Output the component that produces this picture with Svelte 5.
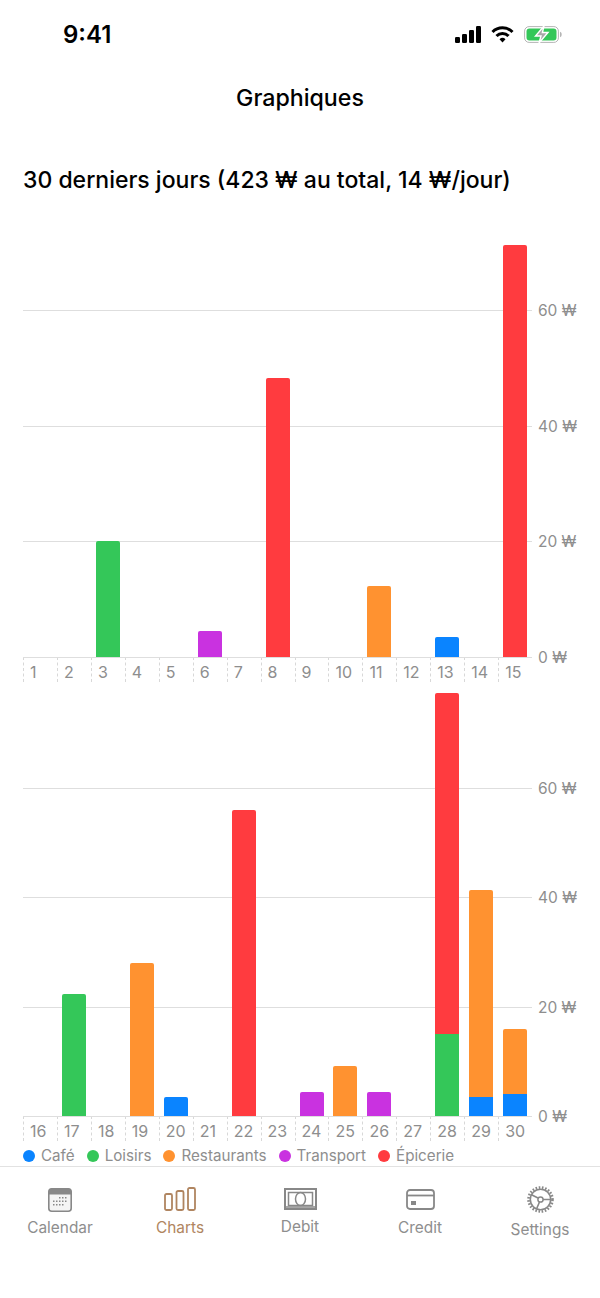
<script>
  const categories = [
    { name: "Café", color: "#0a84ff" },
    { name: "Loisirs", color: "#34c759" },
    { name: "Restaurants", color: "#ff9230" },
    { name: "Transport", color: "#c932e0" },
    { name: "Épicerie", color: "#ff3b3f" },
  ];
  const [cafe, loisirs, resto, transport, epicerie] = categories.map((c) => c.color);

  // segments are [color, value], stacked from the bottom
  const charts = [
    {
      scale: 5.78,
      height: 412,
      days: {
        3: [[loisirs, 20]],
        6: [[transport, 4.5]],
        8: [[epicerie, 48.3]],
        11: [[resto, 12.3]],
        13: [[cafe, 3.4]],
        15: [[epicerie, 71.3]],
      },
      from: 1,
    },
    {
      scale: 5.47,
      height: 423,
      days: {
        17: [[loisirs, 22.3]],
        19: [[resto, 27.9]],
        20: [[cafe, 3.4]],
        22: [[epicerie, 56]],
        24: [[transport, 4.4]],
        25: [[resto, 9.2]],
        26: [[transport, 4.4]],
        28: [[loisirs, 15], [epicerie, 62.3]],
        29: [[cafe, 3.4], [resto, 38]],
        30: [[cafe, 4], [resto, 11.9]],
      },
      from: 16,
    },
  ];
  const axis = [0, 20, 40, 60];
  const range = (from) => Array.from({ length: 15 }, (_, i) => from + i);
</script>

<div class="page">
  <div class="status">
    <span class="time">9:41</span>
    <div class="status-icons">
      <svg width="26" height="17" viewBox="0 0 26 17" fill="#000">
        <rect x="0" y="11" width="5" height="6" rx="1.2" />
        <rect x="7" y="8" width="5" height="9" rx="1.2" />
        <rect x="14" y="4" width="5" height="13" rx="1.2" />
        <rect x="21" y="0" width="5" height="17" rx="1.2" />
      </svg>
      <svg width="23" height="17" viewBox="0 0 23 17" fill="none" stroke="#000" stroke-width="3">
        <path d="M1.5 6a14 14 0 0 1 20 0" />
        <path d="M5.5 10a8.4 8.4 0 0 1 12 0" />
        <path d="M11.5 16.5l-3-3.3a4.3 4.3 0 0 1 6 0z" fill="#000" stroke="none" />
      </svg>
      <svg width="38" height="17" viewBox="0 0 38 17">
        <rect x="0.6" y="0.6" width="33.8" height="15.8" rx="4.5" fill="none" stroke="#b5b5b5" />
        <rect x="2.5" y="2.5" width="30" height="12" rx="3" fill="#34c759" />
        <path d="M36 5.8c1.2.4 1.7 1.5 1.7 2.7s-.5 2.3-1.7 2.7z" fill="#b5b5b5" />
        <path d="M20 0L11.5 10h5.5L15 17l9-10.5h-5.6z" fill="#a8a8a8" stroke="#fff" stroke-width="1.4" />
      </svg>
    </div>
  </div>

  <h1 class="nav-title">Graphiques</h1>
  <h2 class="heading">30 derniers jours (423 ₩ au total, 14 ₩/jour)</h2>

  <div class="charts">
    {#each charts as chart}
      <div class="chart">
        <div class="plot" style="height: {chart.height}px">
          {#each axis as tick}
            <div class="gridline" style="bottom: {tick * chart.scale - 1}px">
              <span class="axis-label">{tick} ₩</span>
            </div>
          {/each}
          {#each range(chart.from) as day}
            <div class="col">
              {#if chart.days[day]}
                <div class="bar">
                  {#each [...chart.days[day]].reverse() as [color, value]}
                    <div style="background: {color}; height: {value * chart.scale}px"></div>
                  {/each}
                </div>
              {/if}
            </div>
          {/each}
        </div>
        <div class="ticks">
          {#each range(chart.from) as day}
            <span class="tick">{day}</span>
          {/each}
        </div>
      </div>
    {/each}
  </div>

  <div class="legend">
    {#each categories as cat}
      <span class="legend-item"><i style="background: {cat.color}"></i>{cat.name}</span>
    {/each}
  </div>

  <nav class="tabs">
    <div class="tab t-cal">
      <svg width="24" height="24" viewBox="0 0 24 24">
        <rect x="0.8" y="0.8" width="22.4" height="22.4" rx="3" fill="#f4f4f4" stroke="#888" stroke-width="1.6" />
        <path d="M3 0.8h18a2.2 2.2 0 0 1 2.2 2.2v3.5H.8V3A2.2 2.2 0 0 1 3 .8z" fill="#888" />
        <g fill="#888">
          <rect x="11" y="9" width="1.5" height="1.5" /><rect x="14" y="9" width="1.5" height="1.5" /><rect x="17" y="9" width="1.5" height="1.5" />
          <rect x="5" y="12.5" width="1.5" height="1.5" /><rect x="8" y="12.5" width="1.5" height="1.5" /><rect x="11" y="12.5" width="1.5" height="1.5" /><rect x="14" y="12.5" width="1.5" height="1.5" /><rect x="17" y="12.5" width="1.5" height="1.5" />
          <rect x="5" y="16" width="1.5" height="1.5" /><rect x="8" y="16" width="1.5" height="1.5" /><rect x="11" y="16" width="1.5" height="1.5" /><rect x="14" y="16" width="1.5" height="1.5" />
        </g>
      </svg>
      <span class="tab-label">Calendar</span>
    </div>
    <div class="tab t-charts active">
      <svg width="32" height="24" viewBox="0 0 32 24" fill="none" stroke="#b08560" stroke-width="1.8">
        <rect x="1" y="7" width="7" height="16" rx="1.5" />
        <rect x="12.5" y="4" width="7" height="19" rx="1.5" />
        <rect x="24" y="1" width="7" height="22" rx="1.5" />
      </svg>
      <span class="tab-label">Charts</span>
    </div>
    <div class="tab t-debit">
      <svg width="33" height="22" viewBox="0 0 33 22" fill="none" stroke="#888" stroke-width="1.5">
        <rect x="1" y="1" width="31" height="20" stroke-width="2" />
        <rect x="4.5" y="4.5" width="24" height="13" />
        <ellipse cx="16.5" cy="11" rx="5" ry="6.5" />
        <path d="M1 19h31" />
      </svg>
      <span class="tab-label">Debit</span>
    </div>
    <div class="tab t-credit">
      <svg width="29" height="21" viewBox="0 0 29 21" fill="none" stroke="#888" stroke-width="1.8">
        <rect x="1" y="1" width="27" height="19" rx="3" />
        <path d="M1 6.5h27" />
        <rect x="5" y="12" width="5" height="4" fill="#888" stroke="none" />
      </svg>
      <span class="tab-label">Credit</span>
    </div>
    <div class="tab t-settings">
      <svg width="27" height="27" viewBox="0 0 27 27" fill="none" stroke="#888">
        <circle cx="13.5" cy="13.5" r="12" stroke-width="2.6" stroke-dasharray="1.6 1.6" />
        <circle cx="13.5" cy="13.5" r="10.2" stroke-width="1.6" />
        <circle cx="13.5" cy="13.5" r="2.6" stroke-width="1.5" />
        <path d="M11 12L4 8.5M16 13.5h7M12.5 16l-3 7" stroke-width="1.6" />
      </svg>
      <span class="tab-label">Settings</span>
    </div>
  </nav>
</div>

<style>
  :global(body) {
    background: #fff;
    font-family: Inter, "Liberation Sans", sans-serif;
  }
  .page {
    height: 1298px;
    overflow: hidden;
  }
  .status {
    display: flex;
    justify-content: space-between;
    align-items: center;
    height: 68px;
    padding: 0 38px 0 63px;
  }
  .time {
    font-size: 24px;
    font-weight: 600;
    color: #000;
  }
  .status-icons {
    display: flex;
    align-items: center;
    gap: 10px;
  }
  .nav-title {
    margin: 16px 0 0;
    font-size: 23.2px;
    line-height: 28px;
    font-weight: 500;
    text-align: center;
    color: #000;
  }
  .heading {
    margin: 53px 0 0 23px;
    font-size: 23px;
    line-height: 30px;
    font-weight: 500;
    color: #000;
  }
  .charts {
    margin-top: 50px;
    display: flex;
    flex-direction: column;
    gap: 11px;
  }
  .chart {
    margin-left: 23px;
    width: 509px;
  }
  .plot {
    position: relative;
    display: flex;
    align-items: flex-end;
  }
  .gridline {
    position: absolute;
    left: 0;
    right: 0;
    height: 1px;
    background: #dedede;
  }
  .axis-label {
    position: absolute;
    left: calc(100% + 6px);
    top: -9px;
    font-size: 15.5px;
    line-height: 20px;
    color: #8e8e8e;
    white-space: nowrap;
  }
  .col {
    position: relative;
    flex: 1;
    padding-left: 5px;
    box-sizing: border-box;
  }
  .bar {
    width: 24px;
    border-radius: 2px 2px 0 0;
    overflow: hidden;
  }
  .ticks {
    display: flex;
    height: 25px;
  }
  .tick {
    flex: 1;
    box-sizing: border-box;
    padding-left: 6px;
    border-left: 1px dashed #d8d8d8;
    font-size: 16px;
    line-height: 30px;
    color: #8e8e8e;
  }
  .legend {
    display: flex;
    gap: 12px;
    margin: 5px 0 0 23px;
    height: 20px;
    font-size: 15.2px;
    line-height: 20px;
    color: #8e8e8e;
  }
  .legend-item {
    display: flex;
    align-items: center;
    gap: 6px;
  }
  .legend-item i {
    width: 12px;
    height: 12px;
    border-radius: 50%;
  }
  .tabs {
    display: grid;
    grid-template-columns: repeat(5, 1fr);
    border-top: 1px solid #e2e2e2;
    padding-top: 19px;
  }
  .tab {
    display: flex;
    flex-direction: column;
    align-items: center;
    color: #8e8e8e;
    font-size: 15.4px;
  }
  .tab.active {
    color: #b08560;
  }
  .tab-label {
    line-height: 20px;
    margin-top: 6px;
  }
  .t-cal {
    padding-top: 2px;
  }
  .t-charts {
    padding-top: 1px;
  }
  .t-charts .tab-label {
    margin-top: 7px;
  }
  .t-debit {
    padding-top: 2px;
  }
  .t-debit .tab-label {
    margin-top: 7px;
  }
  .t-credit {
    padding-top: 3px;
  }
  .t-credit .tab-label {
    margin-top: 8px;
  }
  .t-settings .tab-label {
    margin-top: 7px;
  }
</style>
